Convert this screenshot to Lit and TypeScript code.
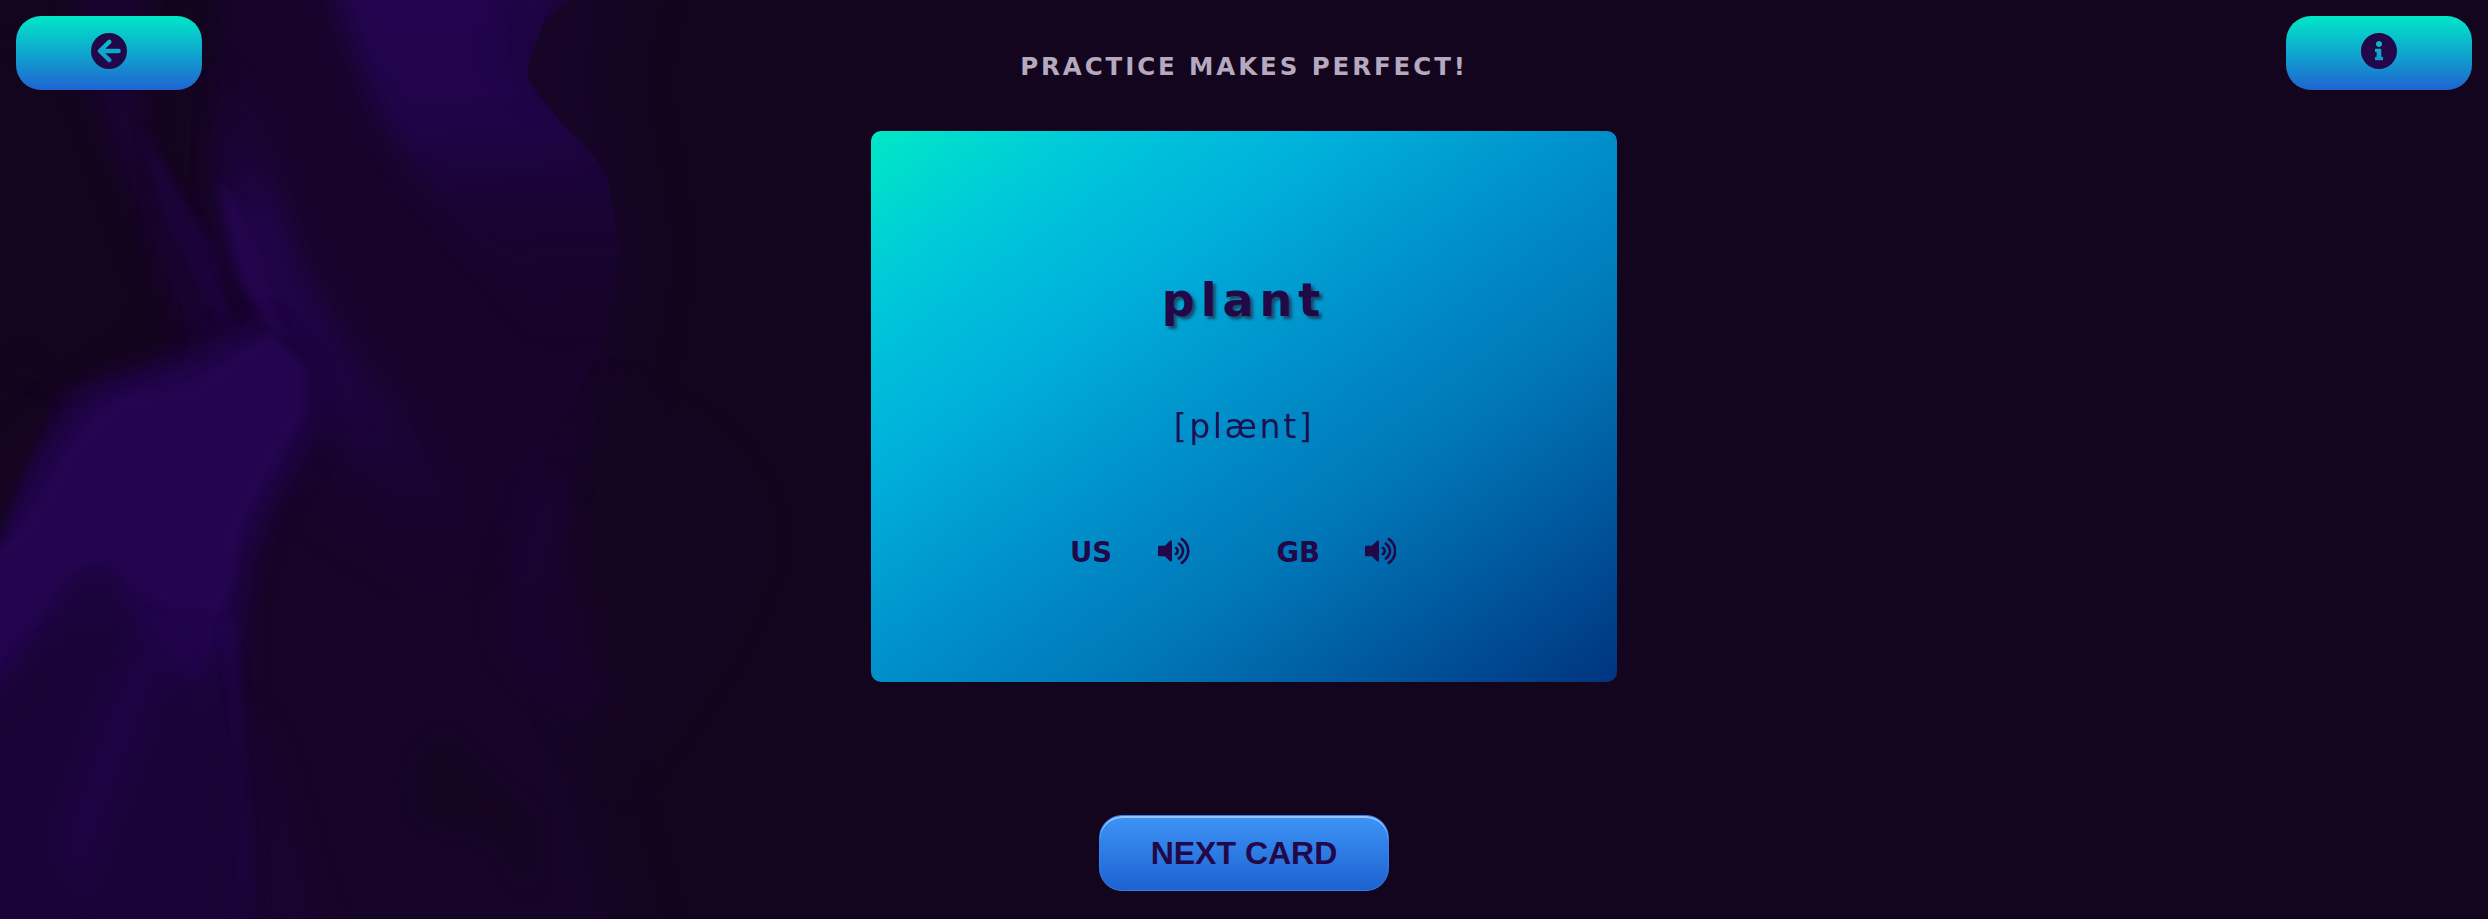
import { LitElement, html, css, svg } from "lit";
import { customElement } from "lit/decorators.js";

const arrowLeft = svg`<mask id="arrow" maskUnits="userSpaceOnUse" x="0" y="0" width="512" height="512"><rect width="512" height="512" fill="#fff"/><path d="M261 131L130 256L261 381M136 256H388" fill="none" stroke="#000" stroke-width="60" stroke-linecap="round" stroke-linejoin="round"/></mask><circle cx="256" cy="256" r="248" mask="url(#arrow)"/>`;
const info = svg`<path d="M256 8C119.043 8 8 119.083 8 256c0 136.997 111.043 248 248 248s248-111.003 248-248C504 119.083 392.957 8 256 8zm0 110c23.196 0 42 18.804 42 42s-18.804 42-42 42-42-18.804-42-42 18.804-42 42-42zm56 254c0 6.627-5.373 12-12 12h-88c-6.627 0-12-5.373-12-12v-24c0-6.627 5.373-12 12-12h12v-64h-12c-6.627 0-12-5.373-12-12v-24c0-6.627 5.373-12 12-12h64c6.627 0 12 5.373 12 12v100h12c6.627 0 12 5.373 12 12v24z"/>`;
const speaker = svg`<path d="M215.030 71.050L126.060 160H24c-13.260 0-24 10.740-24 24v144c0 13.250 10.740 24 24 24h102.060l88.970 88.950c15.030 15.030 40.970 4.470 40.970-16.970V88.020c0-21.460-25.960-31.980-40.970-16.970zm233.320-51.080c-11.170-7.330-26.180-4.240-33.510 6.950-7.340 11.170-4.220 26.180 6.950 33.510 66.270 43.490 105.820 116.600 105.820 195.580 0 78.980-39.550 152.090-105.820 195.580-11.170 7.320-14.290 22.340-6.950 33.500 7.040 10.710 21.930 14.560 33.510 6.950C528.270 439.580 576 351.330 576 256S528.270 72.430 448.350 19.970zM480 256c0-63.530-32.060-121.940-85.770-156.240-11.190-7.140-26.030-3.820-33.120 7.460s-3.780 26.210 7.410 33.360C408.270 165.970 432 209.110 432 256s-23.730 90.020-63.480 115.420c-11.190 7.140-14.500 22.070-7.410 33.360 6.510 10.360 21.120 15.140 33.120 7.460C447.940 377.940 480 319.540 480 256zm-141.770-76.870c-11.580-6.330-26.190-2.160-32.610 9.450-6.390 11.610-2.160 26.200 9.450 32.610C327.980 228.280 336 241.630 336 256c0 14.380-8.020 27.720-20.920 34.810-11.610 6.410-15.840 21-9.450 32.610 6.430 11.660 21.050 15.800 32.610 9.450 28.230-15.550 45.770-45 45.770-76.880s-17.540-61.320-45.780-76.860z"/>`;

@customElement("app-root")
export class AppRoot extends LitElement {
  static styles = css`
    :host {
      display: block;
      position: relative;
      height: 919px;
      overflow: hidden;
      background: #13051e;
      font-family: "DejaVu Sans", Verdana, sans-serif;
      color: #220749;
    }
    * { box-sizing: border-box; }
    .smoke { position: absolute; left: 0; top: 0; width: 840px; height: 919px; }
    .page {
      position: relative;
      height: 100%;
      display: grid;
      grid-template-columns: 1fr 746px 1fr;
      grid-template-rows: 131px 551px 1fr;
    }
    .corner { padding: 16px; }
    .corner.right { display: flex; justify-content: flex-end; align-items: flex-start; }
    button { border: 0; font: inherit; color: inherit; margin: 0; }
    .nav {
      display: flex;
      justify-content: center;
      width: 186px;
      height: 74px;
      padding: 17px 0 0;
      border-radius: 25px;
      background: linear-gradient(#00e8c8, #1f64d2);
    }
    .nav svg { width: 36px; height: 36px; display: block; }
    h1 {
      margin: 0;
      padding-top: 51px;
      text-align: center;
      font-size: 24.5px;
      line-height: 32px;
      letter-spacing: 2.9px;
      color: #b5a9bf;
    }
    .card {
      grid-column: 2;
      grid-row: 2;
      border-radius: 10px;
      background: linear-gradient(to bottom right, #00e8c6, #00c9d9 15%, #00b0db 31%, #0092cb 48%, #0076b7 67%, #00347f);
      display: flex;
      flex-direction: column;
      align-items: center;
    }
    .word {
      margin: 139px 0 0;
      font-size: 46px;
      line-height: 60px;
      font-weight: bold;
      letter-spacing: 6px;
      text-shadow: 3px 3px 3px rgba(34, 40, 60, 0.7);
    }
    .phon { margin-top: 77px; font-size: 33px; line-height: 40px; letter-spacing: 2.6px; opacity: 0.93; }
    .voices { display: flex; margin-top: 87px; width: 478px; padding-left: 65px; }
    .voice { flex: 1; display: flex; align-items: center; font-size: 27.5px; line-height: 36px; font-weight: bold; }
    .voice span { width: 88px; }
    .voice svg { width: 31.500px; height: 28px; margin-top: -3px; }
    .bottom { grid-column: 2; grid-row: 3; padding-top: 133px; display: flex; justify-content: center; align-items: flex-start; }
    .next {
      width: 290px;
      height: 76px;
      border-radius: 23px;
      padding: 0;
      background: linear-gradient(#3d94f6, #1e62d0);
      border: 1px solid #337fed;
      box-shadow: inset 0 2px 0 #97c4fe;
      font: bold 32px/74px "Liberation Sans", Arial, sans-serif;
    }
  `;

  private voice(label: string) {
    return html`<div class="voice"><span>${label}</span>
      <svg viewBox="0 0 576 512" fill="currentColor">${speaker}</svg></div>`;
  }

  render() {
    return html`
      <svg class="smoke" viewBox="0 0 840 919" preserveAspectRatio="none" color-interpolation-filters="sRGB">
        <defs>
          <filter id="b5" x="-30%" y="-30%" width="160%" height="160%"><feGaussianBlur stdDeviation="5" /></filter>
          <filter id="b12" x="-50%" y="-50%" width="200%" height="200%"><feGaussianBlur stdDeviation="13" /></filter>
          <filter id="b20" x="-50%" y="-50%" width="200%" height="200%"><feGaussianBlur stdDeviation="26" /></filter>
          <linearGradient id="fall" gradientUnits="userSpaceOnUse" x1="460" y1="0" x2="490" y2="340"><stop stop-color="#23044f" /><stop offset=".35" stop-color="#200449" /><stop offset=".65" stop-color="#1a0436" stop-opacity=".7" /><stop offset="1" stop-color="#17042c" stop-opacity="0" /></linearGradient>
          <linearGradient id="streak" gradientUnits="userSpaceOnUse" x1="220" y1="60" x2="420" y2="500"><stop stop-color="#1b0439" stop-opacity="0" /><stop offset=".35" stop-color="#23044e" /><stop offset=".68" stop-color="#200446" /><stop offset="1" stop-color="#1b0438" stop-opacity=".5" /></linearGradient>
          <clipPath id="edge"><path d="M-20-40H620L545 20L530 60Q524 76 535 90L562 123L594 157Q606 170 610 190L619 247L605 333L581 387L546 447L520 600L-20 600Z" /></clipPath>
        </defs>
        <path d="M230-40H640L610 80L630 175L640 260L618 400L590 480L620 650L585 740L640 960H-40V500L80 420L180 350L200 120Z" fill="#17052a" opacity=".75" filter="url(#b20)" />
        <path d="M618 380L700 430Q760 480 766 540Q740 650 620 790L560 730L540 500Z" fill="#150622" opacity=".7" filter="url(#b12)" />
        <g clip-path="url(#edge)">
          <path d="M230-40H700V300L600 440L540 500L440 600L250 480L215 240Z" fill="#17042c" filter="url(#b12)" />
          <path d="M325-60H590L545 20L540 80L660 200V440L590 400Q500 270 430 190Q350 90 325-60Z" fill="url(#fall)" filter="url(#b12)" />
          <path d="M495-10L500 60L545 110L530-20Z" fill="#1a0438" opacity=".5" filter="url(#b12)" />
        </g>
        <path d="M75-20H145L145 130Q165 230 205 290L240 340L220 370Q160 300 135 200Q80 100 75-20Z" fill="#1c033c" opacity=".6" filter="url(#b12)" />
        <path d="M138 120L165 220L205 300L235 340L215 250L175 185Z" fill="#1e0342" opacity=".7" filter="url(#b5)" />
        <path d="M224 40L215 140L222 200L238 265L273 325L310 370L306 420L400 510L460 510L415 430L350 350L300 260L262 140Z" fill="url(#streak)" filter="url(#b12)" opacity=".85" />
        <path d="M217 180L238 205L262 265L285 340L265 325L238 270Z" fill="#25054f" opacity=".9" filter="url(#b5)" />
        <path d="M260 325L310 370L320 430L270 510L248 590L240 700L260 960H-40V600L20 450L75 385L180 355Z" fill="#1b043a" filter="url(#b12)" />
        <path d="M264 325L308 370L306 425L270 490L240 560L228 640L195 710L130 650L80 620L40 640L-25 710V580L30 480L95 390L200 360Z" fill="#230450" opacity=".85" filter="url(#b12)" />
        <path d="M250 345L268 335L306 370L302 415L270 470L240 526L232 585L220 610L165 608L125 580L105 560L70 575L45 610L-10 670V560L35 510L65 450L100 412L130 395L190 388Z" fill="#250550" opacity=".9" filter="url(#b5)" />
        <path d="M100 566Q65 580 56 605L35 650L-20 725V960H247L238 780L220 650L190 690L150 640L116 580Z" fill="#190436" opacity=".75" filter="url(#b12)" />
        <path d="M185 620L145 735L120 800L85 900L55 850Q75 760 125 650Z" fill="#21034a" opacity=".6" filter="url(#b12)" />
        <path d="M222 620L236 620L243 760L252 920L242 870L236 740Z" fill="#22044c" filter="url(#b5)" opacity=".8" />
        <path d="M243 700L275 740L320 900L350 960H258L246 850Z" fill="#1a0434" opacity=".6" filter="url(#b12)" />
        <path d="M612 370L590 400L545 455L510 560L530 600L570 480Z" fill="#1a0438" opacity=".45" filter="url(#b12)" />
        <path d="M545 480Q580 470 570 560Q590 650 605 690Q600 720 580 730Q530 690 500 650Q490 540 545 480Z" fill="#1a0438" opacity=".45" filter="url(#b12)" />
        <path d="M443 740L490 790L525 815L532 890L500 830L425 815L420 770Z" fill="#13051e" filter="url(#b12)" opacity=".7" />
        <path d="M-20 60L55 50Q100 170 125 250L165 340L110 365L60 385L20 340L-20 420Z" fill="#14051f" opacity=".7" filter="url(#b12)" />
        <path d="M-30 370L52 410L25 470L0 535L-30 590Z" fill="#14051f" opacity=".9" filter="url(#b5)" />
      </svg>
      <main class="page">
        <div class="corner"><button class="nav" aria-label="Back"><svg viewBox="8 8 496 496" fill="currentColor">${arrowLeft}</svg></button></div>
        <h1>PRACTICE MAKES PERFECT!</h1>
        <div class="corner right"><button class="nav" aria-label="Info"><svg viewBox="8 8 496 496" fill="currentColor">${info}</svg></button></div>
        <section class="card">
          <div class="word">plant</div>
          <div class="phon">[plænt]</div>
          <div class="voices">${this.voice("US")}${this.voice("GB")}</div>
        </section>
        <div class="bottom"><button class="next">NEXT CARD</button></div>
      </main>
    `;
  }
}
